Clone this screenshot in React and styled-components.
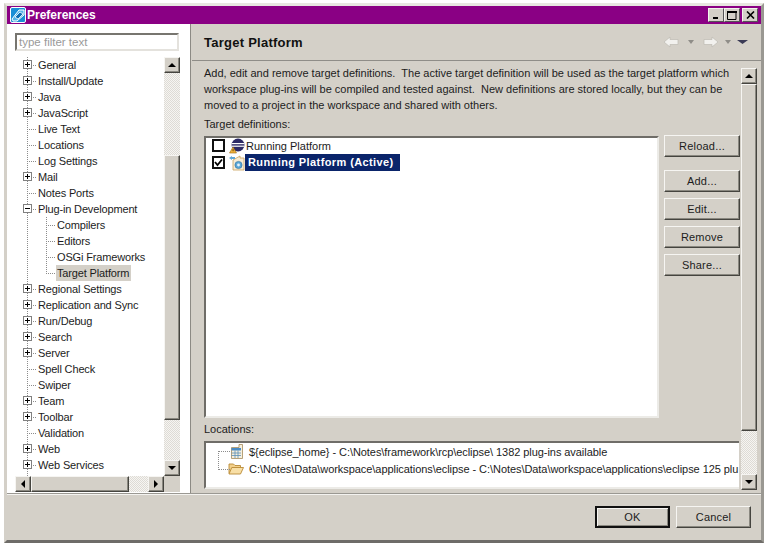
import React from "react";
import styled, { createGlobalStyle, css } from "styled-components";

const Global = createGlobalStyle`
  html, body { margin: 0; padding: 0; background: #fff; }
  body { font-family: "Liberation Sans", Arial, sans-serif; font-size: 11px; color: #1c1c1c; }
`;

const Page = styled.div`
  width: 768px;
  height: 546px;
  padding: 3px 4px 3px 4px;
  box-sizing: border-box;
  overflow: hidden;
`;
const Win = styled.div`
  height: 100%;
  width: 760px;
  box-sizing: border-box;
  background: #d4d0c8;
  border-top: 3px solid #e8e6e1;
  border-left: 3px solid #d4d0c8;
  border-right: 3px solid #9a9892;
  border-bottom: 3px solid #6e6c68;
  display: flex;
  flex-direction: column;
`;
const TitleBar = styled.div`
  height: 18px;
  background: #8a0084;
  display: flex;
  align-items: center;
  padding-left: 3px;
  gap: 1px;
  flex: none;
`;
const TitleText = styled.span`
  color: #fff;
  font: bold 12px "Liberation Sans", sans-serif;
`;
const WinButtons = styled.div`
  margin-left: auto;
  display: flex;
  margin-right: 3px;
`;
const WinButton = styled.div`
  width: 16px;
  height: 14px;
  box-sizing: border-box;
  background: #d4d0c8;
  border: 1px solid;
  border-color: #f4f2ee #555 #555 #f4f2ee;
  display: flex;
  align-items: center;
  justify-content: center;
  margin-left: ${p => p.$gap || 0}px;
`;
const Main = styled.div`
  display: flex;
  height: 469px;
  flex: none;
`;
const Left = styled.div`
  width: 183px;
  background: #fff;
  flex: none;
  padding: 9px 10px 0 8px;
  box-sizing: border-box;
  display: flex;
  flex-direction: column;
`;
const Filter = styled.div`
  height: 18px;
  width: 164px;
  box-sizing: border-box;
  border: 2px solid;
  border-color: #77756f #e4e2dd #e4e2dd #77756f;
  color: #9a9a9a;
  font-size: 11.5px;
  line-height: 14px;
  padding-left: 2px;
  flex: none;
`;
const TreeArea = styled.div`
  margin-top: 6px;
  display: grid;
  grid-template-columns: 149px 16px;
  grid-template-rows: 419px 16px;
`;
const Tree = styled.div`
  position: relative;
  overflow: hidden;
`;
const VLine = styled.div`
  position: absolute;
  left: ${p => p.$x}px;
  top: ${p => p.$top}px;
  height: ${p => p.$h}px;
  border-left: 1px dotted #8c8c8c;
`;
const Row = styled.div`
  height: 16px;
  position: relative;
  padding-left: ${p => (p.$child ? 42 : 23)}px;
  line-height: 16px;
  white-space: nowrap;
  letter-spacing: -0.15px;
  &::before {
    content: "";
    position: absolute;
    left: ${p => (p.$child ? 31 : 12)}px;
    top: 8px;
    width: 9px;
    border-top: 1px dotted #8c8c8c;
  }
`;
const RowLabel = styled.span`
  display: inline-block;
  padding: 0 2px 0 1px;
  margin-left: -1px;
  background: ${p => (p.$sel ? "#d4d0c8" : "transparent")};
`;
const Expander = styled.span`
  position: absolute;
  left: 8px;
  top: 3px;
  width: 9px;
  height: 9px;
  box-sizing: border-box;
  background: #fff;
  border: 1px solid #808080;
  z-index: 1;
  &::before {
    content: "";
    position: absolute;
    left: 1px;
    top: 3px;
    width: 5px;
    height: 1px;
    background: #000;
  }
  ${p => p.$plus && css`
    &::after {
      content: "";
      position: absolute;
      left: 3px;
      top: 1px;
      width: 1px;
      height: 5px;
      background: #000;
    }
  `}
`;
const dither = css`
  background-color: #eeece8;
  background-image: conic-gradient(#dedbd5 25%, #f6f5f2 0 50%, #dedbd5 0 75%, #f6f5f2 0);
  background-size: 2px 2px;
`;
const VScroll = styled.div`
  width: 16px;
  display: flex;
  flex-direction: column;
  ${dither}
`;
const HScroll = styled.div`
  height: 16px;
  display: flex;
  ${dither}
`;
const raised = css`
  box-sizing: border-box;
  background: #d4d0c8;
  border: 1px solid;
  border-color: #f6f5f2 #45443f #45443f #f6f5f2;
  box-shadow: inset -1px -1px 0 #8a8880;
`;
const ScrollBtn = styled.div`
  ${raised}
  width: 16px;
  height: 16px;
  flex: none;
  display: flex;
  align-items: center;
  justify-content: center;
  margin-top: ${p => (p.$end ? "auto" : 0)};
  margin-left: ${p => (p.$endH ? "auto" : 0)};
`;
const Thumb = styled.div`
  ${raised}
  flex: none;
  ${p => (p.$h ? `height: 16px; width: ${p.$size}px;` : `width: 16px; height: ${p.$size}px; margin-top: ${p.$off || 0}px;`)}
`;
const Corner = styled.div`
  background: #d4d0c8;
`;
const Sash = styled.div`
  width: 2px;
  flex: none;
  box-sizing: border-box;
  background: #d4d0c8;
  border-left: 1px solid #8c8a84;
`;
const Right = styled.div`
  flex: 1;
  display: flex;
  flex-direction: column;
  min-width: 0;
`;
const Head = styled.div`
  height: 37px;
  flex: none;
  box-sizing: border-box;
  border-bottom: 1px solid #8f8d88;
  display: flex;
  align-items: center;
  padding-left: 12px;
`;
const HeadTitle = styled.div`
  font: bold 13px "Liberation Sans", sans-serif;
  color: #111;
  letter-spacing: 0.25px;
`;
const Nav = styled.div`
  margin-left: auto;
  display: flex;
  align-items: center;
  margin-right: 13px;
`;
const DropSlot = styled.span`
  display: flex;
  justify-content: center;
  width: ${p => p.$w}px;
`;
const Content = styled.div`
  flex: 1;
  display: flex;
  min-height: 0;
  padding: 4px 4px 0 12px;
`;
const Col = styled.div`
  width: 536px;
  flex: none;
  display: flex;
  flex-direction: column;
`;
const Desc = styled.div`
  line-height: 16px;
  white-space: nowrap;
  height: 48px;
  flex: none;
`;
const Label = styled.div`
  height: 16px;
  line-height: 16px;
  margin-top: ${p => p.$mt}px;
  flex: none;
`;
const DefRow = styled.div`
  display: flex;
  margin-top: 4px;
  height: 282px;
  flex: none;
`;
const ListBox = styled.div`
  width: 455px;
  flex: none;
  box-sizing: border-box;
  background: #fff;
  border: 2px solid;
  border-color: #6f6d68 #ecebe7 #ecebe7 #6f6d68;
  padding: 0 0 0 6px;
`;
const DefItem = styled.div`
  height: 17px;
  display: flex;
  align-items: center;
  &:first-child {
    height: 15px;
    padding-bottom: 1px;
  }
`;
const Check = styled.span`
  width: 13px;
  height: 13px;
  box-sizing: border-box;
  background: #fff;
  border: 2px solid #111;
  flex: none;
  display: flex;
  align-items: center;
  justify-content: center;
  margin-right: 4px;
`;
const DefLabel = styled.span`
  white-space: nowrap;
  margin-left: 1px;
  ${p => p.$sel && css`
    background: #0a246a;
    color: #fff;
    font-weight: bold;
    padding: 0 3px 0 3px;
    line-height: 17px;
    height: 17px;
    width: 155px;
    box-sizing: border-box;
    margin-left: -1px;
    letter-spacing: 0.4px;
  `}
`;
const BtnCol = styled.div`
  width: 76px;
  margin: -1px 0 0 5px;
  display: flex;
  flex-direction: column;
  flex: none;
`;
const Btn = styled.div`
  ${raised}
  height: 22px;
  width: ${p => p.$w || 76}px;
  display: flex;
  align-items: center;
  justify-content: center;
  margin-top: ${p => p.$mt || 0}px;
  letter-spacing: 0.2px;
  flex: none;
`;
const LocBox = styled.div`
  height: 48px;
  margin-top: 4px;
  box-sizing: border-box;
  background: #fff;
  border: 2px solid;
  border-color: #6f6d68 #ecebe7 #ecebe7 #6f6d68;
  border-right: none;
  width: 535px;
  padding: 0 0 0 24px;
  position: relative;
  overflow: hidden;
  flex: none;
`;
const LocItem = styled.div`
  height: 17px;
  display: flex;
  align-items: center;
  gap: 5px;
  white-space: nowrap;
  letter-spacing: -0.06px;
  margin-left: ${p => p.$ml || 0}px;
`;
const LocLines = styled.div`
  position: absolute;
  left: 12px;
  top: 8px;
  width: 11px;
  height: 17px;
  border-left: 1px dotted #8c8c8c;
  border-bottom: 1px dotted #8c8c8c;
  border-top: 1px dotted #8c8c8c;
`;
const RightScroll = styled(VScroll)`
  height: 422px;
  margin: 3px 0 0 1px;
  flex: none;
`;
const Footer = styled.div`
  flex: 1;
  display: flex;
  flex-direction: column;
`;
const FootRule = styled.div`
  height: 2px;
  background: #f4f3f0;
  border-top: 1px solid #9a9892;
  box-sizing: border-box;
  flex: none;
`;
const FootBtns = styled.div`
  display: flex;
  justify-content: flex-end;
  gap: 6px;
  padding: 11px 10px 0 0;
`;
const OkBtn = styled(Btn)`
  border-width: 2px;
  border-color: #111;
  box-shadow: inset 1px 1px 0 #f6f5f2, inset -1px -1px 0 #8a8880;
`;

const Tri = ({ d }) => {
  const p = { up: "0,5 4,1 8,5", down: "0,1 8,1 4,5", left: "5,0 5,8 1,4", right: "1,0 1,8 5,4" }[d];
  const vertical = d === "up" || d === "down";
  const [w, h] = vertical ? [8, 6] : [6, 8];
  return <svg width={w} height={h} viewBox={`0 0 ${w} ${h}`}><polygon points={p} fill="#000" /></svg>;
};

const AppIcon = () => (
  <svg width="16" height="16" viewBox="0 0 16 16" style={{ flex: "none" }}>
    <rect x="0.5" y="0.5" width="15" height="15" rx="1.5" fill="#1a8fd6" stroke="#fff" />
    <path d="M2 12 L9 3 L14 3 L14 8 L7 14 L3 14Z" fill="#57b6ea" stroke="#fff" strokeWidth="1" />
    <path d="M5 10 L10 5 L13 7 L8 12Z" fill="#0e6fb5" stroke="#fff" strokeWidth="0.8" />
  </svg>
);
const ArrowIcon = ({ flip, color = "#f2f1ee" }) => (
  <svg width="16" height="12" viewBox="0 0 16 12" style={{ transform: flip ? "scaleX(-1)" : undefined }}>
    <path d="M1 6 L7 1 L7 3.5 L15 3.5 L15 8.5 L7 8.5 L7 11Z" fill={color} stroke="#bdbab3" strokeWidth="0.7" />
  </svg>
);
const SmallDrop = ({ color = "#8f8d88", w = 6 }) => (
  <svg width={w} height="4" viewBox={`0 0 ${w} 4`}><polygon points={`0,0 ${w},0 ${w / 2},4`} fill={color} /></svg>
);
const EclipseIcon = () => (
  <svg width="16" height="16" viewBox="0 0 16 16" style={{ flex: "none" }}>
    <circle cx="9" cy="7" r="6.5" fill="#2c2a66" />
    <rect x="2.5" y="5" width="13" height="1.2" fill="#fff" />
    <rect x="2.5" y="7.6" width="13" height="1.2" fill="#fff" />
    <path d="M0.5 15 L4 9 L7.5 15Z" fill="#f2b33d" stroke="#9a6a10" strokeWidth="0.6" />
    <rect x="3.6" y="11" width="0.9" height="2.2" fill="#5a3a00" />
  </svg>
);
const ActiveIcon = () => (
  <svg width="17" height="16" viewBox="0 0 17 16" style={{ flex: "none" }}>
    <path d="M4 5 L11 1 L11 3 L15 3 L15 15 L4 15Z" fill="#f7ecd6" stroke="#c9a15c" strokeWidth="0.8" />
    <path d="M0 3 L3 1 L3 2 L6 2 L6 4 L3 4 L3 5Z" fill="#5fa7d8" />
    <circle cx="9.5" cy="10" r="3.6" fill="#5aa6d6" stroke="#2b6f9e" strokeWidth="0.6" />
    <circle cx="9.5" cy="10" r="1.4" fill="#e6f3fb" />
  </svg>
);
const TableIcon = () => (
  <svg width="14" height="15" viewBox="0 0 14 15" style={{ flex: "none" }}>
    <path d="M1.5 3.5 H9 L9 0.5 H12.5 V14.5 H1.5Z" fill="#f6efdd" stroke="#a58a5a" strokeWidth="0.8" />
    <rect x="1.5" y="4" width="9.5" height="2.5" fill="#4b8cc4" />
    <path d="M1.5 9 H11 M1.5 11.5 H11 M5 6.5 V14 M8 6.5 V14" stroke="#5a8fb8" strokeWidth="0.8" />
  </svg>
);
const FolderIcon = () => (
  <svg width="16" height="13" viewBox="0 0 16 13" style={{ flex: "none" }}>
    <path d="M1 11.5 V2 H5.5 L7 3.5 H12.5 V5.5" fill="#f3d08a" stroke="#b98a36" strokeWidth="0.9" />
    <path d="M1 12 L3.8 5.5 H15.5 L12.5 12Z" fill="#f8dfa6" stroke="#b98a36" strokeWidth="0.9" />
  </svg>
);

const treeRows = [
  ["General", 1], ["Install/Update", 1], ["Java", 1], ["JavaScript", 1], ["Live Text"], ["Locations"], ["Log Settings"],
  ["Mail", 1], ["Notes Ports"], ["Plug-in Development", 2], ["Compilers", 0, 1], ["Editors", 0, 1], ["OSGi Frameworks", 0, 1],
  ["Target Platform", 0, 1, 1], ["Regional Settings", 1], ["Replication and Sync", 1], ["Run/Debug", 1], ["Search", 1],
  ["Server", 1], ["Spell Check"], ["Swiper"], ["Team", 1], ["Toolbar", 1], ["Validation"], ["Web", 1], ["Web Services", 1],
];

export default function App() {
  return (
    <Page>
      <Global />
      <Win>
        <TitleBar>
          <AppIcon />
          <TitleText>Preferences</TitleText>
          <WinButtons>
            <WinButton>
              <svg width="8" height="8" viewBox="0 0 8 8"><rect x="1" y="6" width="5" height="2" fill="#000" /></svg>
            </WinButton>
            <WinButton>
              <svg width="10" height="9" viewBox="0 0 10 9"><path d="M0.5 1.5 H9 V8.5 H0.5Z" fill="none" stroke="#000" /><rect x="0" y="0" width="10" height="2" fill="#000" /></svg>
            </WinButton>
            <WinButton $gap={2}>
              <svg width="9" height="8" viewBox="0 0 9 8"><path d="M1 0.5 L8 7.5 M8 0.5 L1 7.5" stroke="#000" strokeWidth="1.6" /></svg>
            </WinButton>
          </WinButtons>
        </TitleBar>
        <Main>
          <Left>
            <Filter>type filter text</Filter>
            <TreeArea>
              <Tree>
                <VLine $x={12} $top={0} $h={419} />
                <VLine $x={31} $top={160} $h={57} />
                {treeRows.map(([t, exp, child, sel]) => (
                  <Row key={t} $child={child}>
                    {exp === 1 && <Expander $plus />}
                    {exp === 2 && <Expander />}
                    <RowLabel $sel={sel}>{t}</RowLabel>
                  </Row>
                ))}
              </Tree>
              <VScroll>
                <ScrollBtn><Tri d="up" /></ScrollBtn>
                <Thumb $size={265} $off={82} />
                <ScrollBtn $end><Tri d="down" /></ScrollBtn>
              </VScroll>
              <HScroll>
                <ScrollBtn><Tri d="left" /></ScrollBtn>
                <Thumb $h $size={98} />
                <ScrollBtn $endH><Tri d="right" /></ScrollBtn>
              </HScroll>
              <Corner />
            </TreeArea>
          </Left>
          <Sash />
          <Right>
            <Head>
              <HeadTitle>Target Platform</HeadTitle>
              <Nav>
                <ArrowIcon />
                <DropSlot $w={24}><SmallDrop /></DropSlot>
                <ArrowIcon flip />
                <DropSlot $w={18}><SmallDrop /></DropSlot>
                <SmallDrop color="#3a3a55" w={11} />
              </Nav>
            </Head>
            <Content>
              <Col>
                <Desc>
                  Add, edit and remove target definitions.&nbsp; The active target definition will be used as the target platform which<br />
                  workspace plug-ins will be compiled and tested against.&nbsp; New definitions are stored locally, but they can be<br />
                  moved to a project in the workspace and shared with others.
                </Desc>
                <Label $mt={3}>Target definitions:</Label>
                <DefRow>
                  <ListBox>
                    <DefItem>
                      <Check />
                      <EclipseIcon />
                      <DefLabel>Running Platform</DefLabel>
                    </DefItem>
                    <DefItem>
                      <Check>
                        <svg width="9" height="9" viewBox="0 0 9 9"><path d="M1 4 L3.5 7 L8 1.5" fill="none" stroke="#000" strokeWidth="1.8" /></svg>
                      </Check>
                      <ActiveIcon />
                      <DefLabel $sel>Running Platform (Active)</DefLabel>
                    </DefItem>
                  </ListBox>
                  <BtnCol>
                    <Btn>Reload...</Btn>
                    <Btn $mt={13}>Add...</Btn>
                    <Btn $mt={6}>Edit...</Btn>
                    <Btn $mt={6}>Remove</Btn>
                    <Btn $mt={6}>Share...</Btn>
                  </BtnCol>
                </DefRow>
                <Label $mt={3}>Locations:</Label>
                <LocBox>
                  <LocLines />
                  <LocItem><TableIcon />{"${eclipse_home} - C:\\Notes\\framework\\rcp\\eclipse\\ 1382 plug-ins available"}</LocItem>
                  <LocItem $ml={-2}><FolderIcon />{"C:\\Notes\\Data\\workspace\\applications\\eclipse - C:\\Notes\\Data\\workspace\\applications\\eclipse 125 plu"}</LocItem>
                </LocBox>
              </Col>
              <RightScroll>
                <ScrollBtn><Tri d="up" /></ScrollBtn>
                <Thumb $size={347} />
                <ScrollBtn $end><Tri d="down" /></ScrollBtn>
              </RightScroll>
            </Content>
          </Right>
        </Main>
        <Footer>
          <FootRule />
          <FootBtns>
            <OkBtn $w={75}>OK</OkBtn>
            <Btn $w={75}>Cancel</Btn>
          </FootBtns>
        </Footer>
      </Win>
    </Page>
  );
}
